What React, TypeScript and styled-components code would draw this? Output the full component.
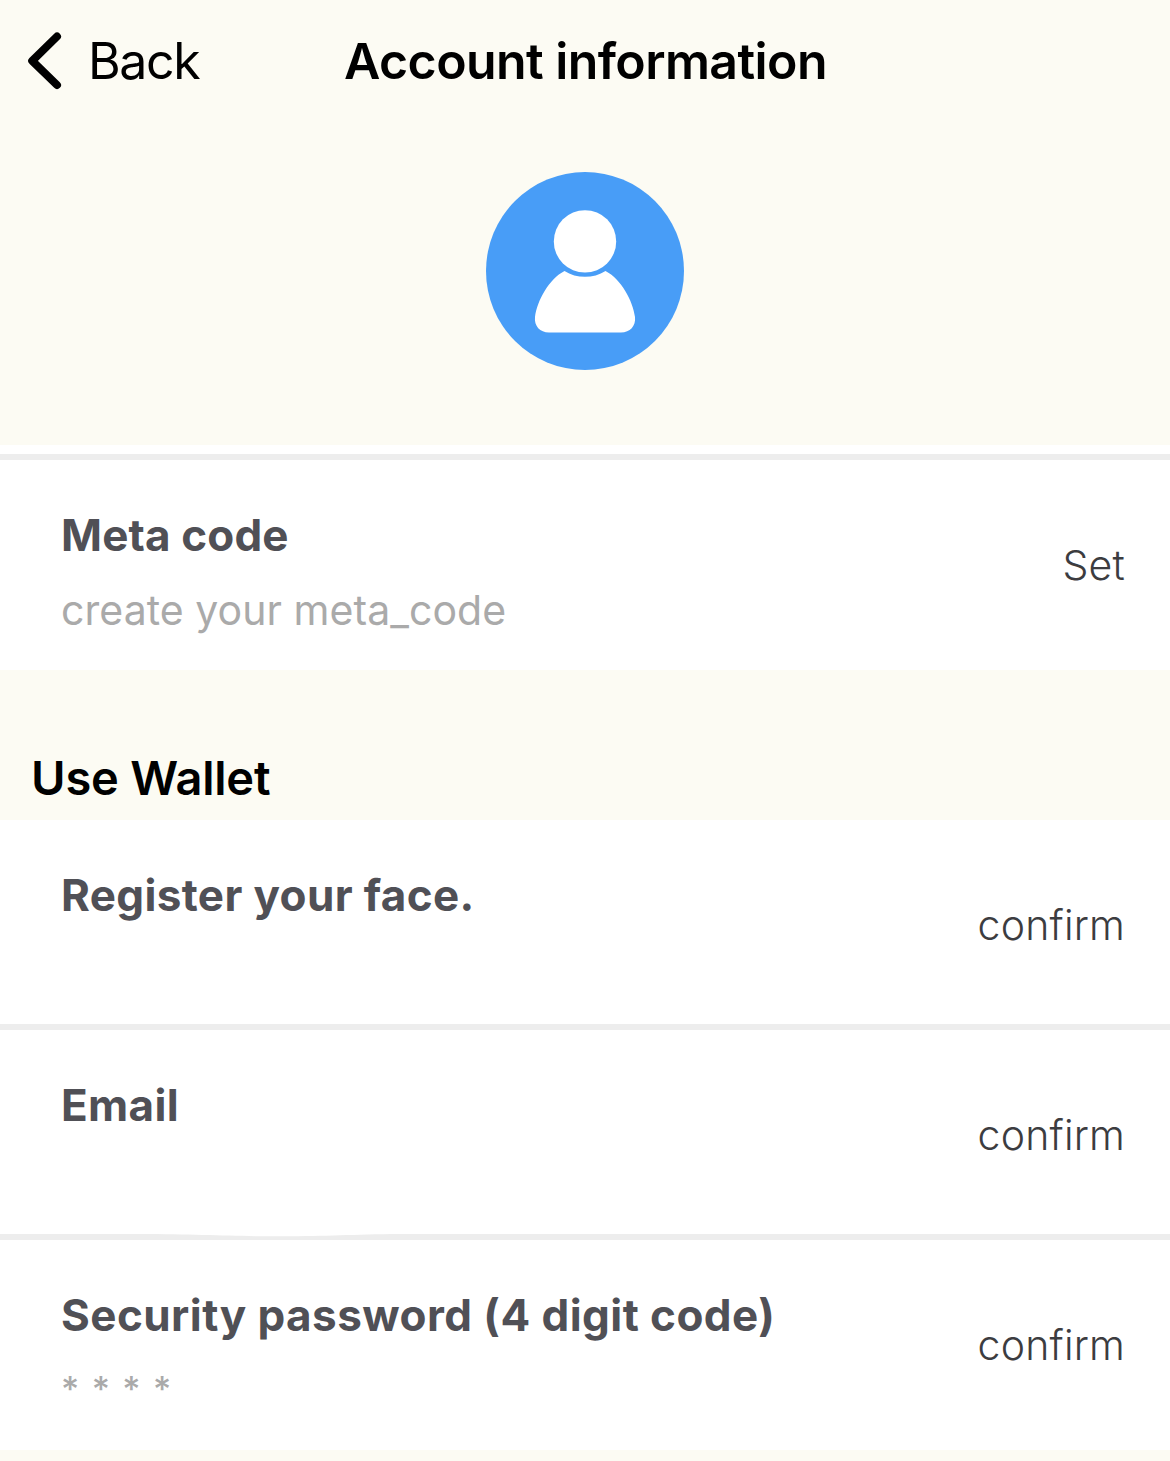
import React from "react";
import styled, { createGlobalStyle } from "styled-components";

const Global = createGlobalStyle`
  * { box-sizing: border-box; }
  body { margin: 0; background: #fcfbf3; font-family: Inter, "Liberation Sans", sans-serif; }
`;

const Screen = styled.main`
  width: 1170px;
  height: 1461px;
  display: flex;
  flex-direction: column;
  overflow: hidden;
  background: #fcfbf3;
`;

const NavBar = styled.header`
  height: 122px;
  flex: none;
  display: grid;
  grid-template-columns: 344px 482px 1fr;
  align-items: center;
`;

const BackButton = styled.button`
  display: flex;
  align-items: center;
  gap: 25px;
  padding: 0 0 0 26px;
  border: 0;
  background: none;
  color: #000;
  font-family: inherit;
`;

const Label = styled.span<{ $size: number; $weight: number; $color?: string; $spacing?: number; $line?: number }>`
  display: block;
  white-space: nowrap;
  font-size: ${(p) => p.$size}px;
  font-weight: ${(p) => p.$weight};
  color: ${(p) => p.$color ?? "#000"};
  letter-spacing: ${(p) => p.$spacing ?? 0}px;
  line-height: ${(p) => p.$line ?? 60}px;
`;

const AvatarArea = styled.section`
  height: 323px;
  flex: none;
  display: flex;
  justify-content: center;
  align-items: flex-start;
  padding-top: 49px;
`;

const Divider = styled.div`
  height: 15px;
  flex: none;
  background: #fff;
  border-bottom: 6px solid #ededed;
`;

const Row = styled.section<{ $line?: boolean }>`
  position: relative;
  height: 210px;
  flex: none;
  display: flex;
  justify-content: space-between;
  align-items: center;
  padding: 0 45px 0 61px;
  background: #fff;
  box-shadow: ${(p) => (p.$line ? "inset 0 -6px #ededed" : "none")};
`;

const Details = styled.div`
  align-self: flex-start;
  display: flex;
  flex-direction: column;
  padding-top: 45px;
  gap: 16px;
`;

const Heading = styled.h2`
  height: 150px;
  flex: none;
  display: flex;
  align-items: flex-end;
  margin: 0;
  padding: 0 0 12px 31px;
`;

const CurvedEdge = styled.svg`
  position: absolute;
  left: 140px;
  bottom: 3px;
`;

function Avatar() {
  return (
    <svg width="200" height="200" viewBox="0 0 200 200" aria-label="Profile">
      <circle cx="100" cy="100" r="99" fill="#489df7" />
      <path
        d="M79.5 100C64 108 52 130 50 146C49 155 55 161.5 64 161.5H136C145 161.5 151 155 150 146C148 130 136 108 120.500 100C108.500 107.800 91.500 107.800 79.500 100Z"
        fill="#fff"
      />
      <circle cx="100" cy="70.400" r="31.200" fill="#fff" />
    </svg>
  );
}

type Item = {
  title: string;
  spacing?: number;
  sub?: React.ReactNode;
  action: string;
  line?: boolean;
  curved?: boolean;
};

function AccountRow({ title, spacing, sub, action, line, curved }: Item) {
  return (
    <Row $line={line}>
      <Details>
        <Label $size={44} $weight={700} $color="#505056" $spacing={spacing}>{title}</Label>
        {sub}
      </Details>
      <Label $size={41} $weight={300} $color="#3c3c40" $spacing={0.2}>{action}</Label>
      {curved && (
        <CurvedEdge width="260" height="3" viewBox="0 0 260 3" aria-hidden="true">
          <path d="M0 0C60 0.400 90 2.300 140 2.300S210 0.400 260 0Z" fill="#fff" />
        </CurvedEdge>
      )}
    </Row>
  );
}

export default function App() {
  return (
    <>
      <Global />
      <Screen>
        <NavBar>
          <BackButton>
            <svg width="37" height="60" viewBox="0 0 37 60" fill="none" stroke="#000" strokeWidth="8">
              <path d="M31 5.500L6.200 29.800L31 54" strokeLinecap="round" strokeLinejoin="round" />
            </svg>
            <Label $size={50} $weight={400} $spacing={-1.4}>Back</Label>
          </BackButton>
          <Label $size={50} $weight={600} $spacing={-0.58}>Account information</Label>
        </NavBar>
        <AvatarArea><Avatar /></AvatarArea>
        <Divider />
        <AccountRow
          title="Meta code"
          spacing={0.15}
          sub={<Label $size={41} $weight={400} $color="#aaa" $spacing={0.05} $line={59}>create your meta_code</Label>}
          action="Set"
        />
        <Heading><Label $size={47} $weight={600} $spacing={-0.2}>Use Wallet</Label></Heading>
        <AccountRow title="Register your face." spacing={0.37} action="confirm" line />
        <AccountRow title="Email" spacing={0.35} action="confirm" line curved />
        <AccountRow
          title="Security password (4 digit code)"
          spacing={0.45}
          sub={<Label $size={35} $weight={500} $color="#aaa" $spacing={1.55} $line={56}>* * * *</Label>}
          action="confirm"
        />
      </Screen>
    </>
  );
}
